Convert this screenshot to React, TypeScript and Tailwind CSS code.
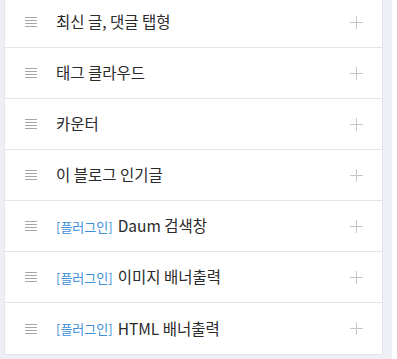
import React from "react";

const items: { plugin?: boolean; label: string }[] = [
  { label: "최신 글, 댓글 탭형" },
  { label: "태그 클라우드" },
  { label: "카운터" },
  { label: "이 블로그 인기글" },
  { plugin: true, label: "Daum 검색창" },
  { plugin: true, label: "이미지 배너출력" },
  { plugin: true, label: "HTML 배너출력" },
];

function Handle() {
  return (
    <svg width="12" height="10" viewBox="0 0 12 10" className="shrink-0">
      <rect x="0" y="0" width="12" height="1" fill="#a8a8a8" />
      <rect x="0" y="3" width="12" height="1" fill="#a8a8a8" />
      <rect x="0" y="6" width="12" height="1" fill="#a8a8a8" />
      <rect x="0" y="9" width="12" height="1" fill="#a8a8a8" />
    </svg>
  );
}

function Plus() {
  return (
    <svg width="13" height="13" viewBox="0 0 13 13" className="shrink-0">
      <rect x="6" y="0" width="1" height="13" fill="#c4c4c4" />
      <rect x="0" y="6" width="13" height="1" fill="#c4c4c4" />
    </svg>
  );
}

export default function App() {
  return (
    <div className="w-[397px] h-[359px] bg-white overflow-hidden">
      <div
        className="w-[392px] h-[359px] bg-[#eff0f5] pl-[4px] pr-[9px] overflow-hidden"
        style={{ fontFamily: '"Noto Sans CJK KR", "Noto Sans", sans-serif' }}
      >
        <div className="-mt-[4px] bg-white border border-[#e2e3ec]">
          {items.map((it, i) => (
            <div
              key={i}
              className={`h-[51px] flex items-center pl-[20px] pr-[19px] ${
                i < items.length - 1 ? "border-b border-[#e2e3ec]" : ""
              }`}
            >
              <Handle />
              <div className="ml-[19px] flex-1 flex items-center text-[15.5px] text-[#2a2a2a] leading-none">
                {it.plugin && (
                  <span className="text-[13px] text-[#3d8fd8] mr-[5px]">[플러그인]</span>
                )}
                <span>{it.label}</span>
              </div>
              <Plus />
            </div>
          ))}
        </div>
      </div>
    </div>
  );
}
